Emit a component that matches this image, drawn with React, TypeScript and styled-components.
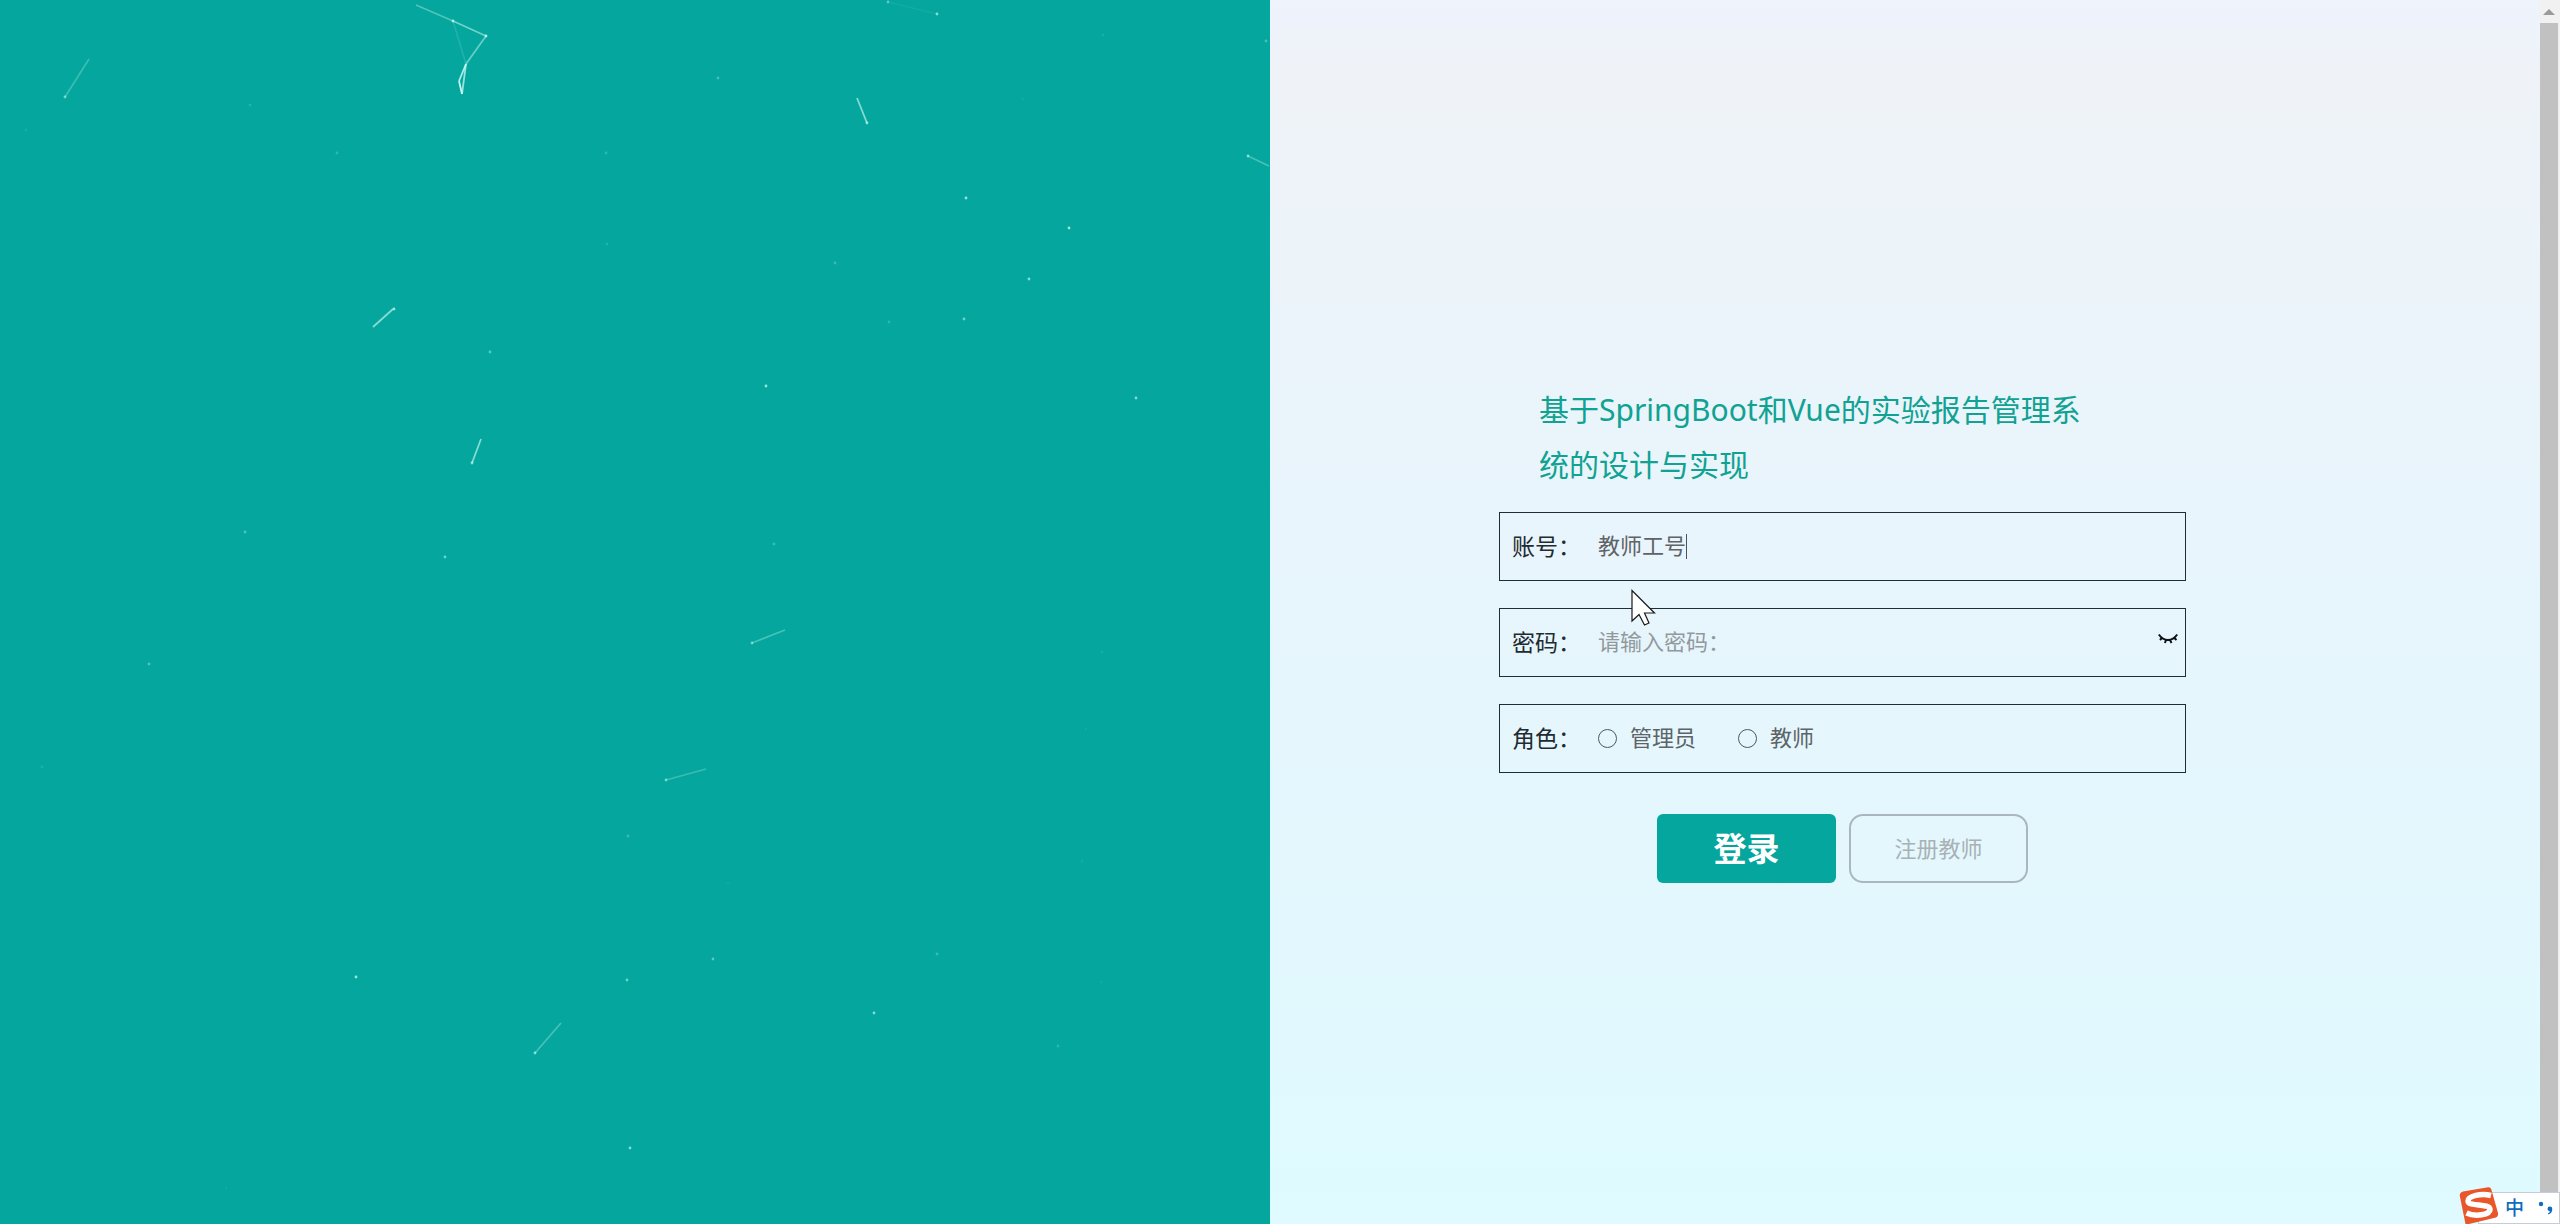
import React, { useState } from "react";
import styled, { createGlobalStyle } from "styled-components";

const GlobalStyle = createGlobalStyle`
  *, *::before, *::after { box-sizing: border-box; }
  body {
    margin: 0;
    overflow: hidden;
    font-family: "Noto Sans", "Noto Sans CJK SC", sans-serif;
  }
  button, input { font: inherit; }
`;

const Page = styled.div`
  display: flex;
  min-height: 100vh;
`;

const Split = styled.main`
  flex: 1;
  display: grid;
  grid-template-columns: 1fr 1fr;
`;

const Sky = styled.section`
  background: #04a69d;
  display: flex;
  overflow: hidden;
`;

const Particles = styled.svg`
  display: block;
  width: 100%;
  height: 100vh;
`;

const FormSide = styled.section`
  display: grid;
  grid-template-columns: 229fr 687fr 354fr;
  align-content: center;
  padding-top: 41px;
  background: linear-gradient(180deg, #eef3fc 0%, #eff3f8 6%, #eaf4fb 33%, #e5f6fd 60%, #dffbff 100%);
`;

const Form = styled.form`
  grid-column: 2;
  display: flex;
  flex-direction: column;
`;

const Title = styled.h1`
  margin: 0 0 20px;
  padding: 0 86px 0 40px;
  font-size: 30px;
  line-height: 55px;
  font-weight: 400;
  color: #10a292;
`;

const Fields = styled.div`
  display: flex;
  flex-direction: column;
  gap: 27px;
`;

const Field = styled.div`
  display: flex;
  align-items: center;
  height: 69px;
  padding: 0 7px 0 12px;
  border: 1px solid #1f2d35;
  font-size: 22px;
  line-height: 32px;
`;

const FieldName = styled.label`
  width: 86px;
  flex: none;
  padding-bottom: 2px;
  font-size: 23px;
  color: #1f2b30;
`;

const TextInput = styled.input<{ $fit?: boolean }>`
  ${(p) => (p.$fit ? "field-sizing: content;" : "flex: 1;")}
  min-width: 0;
  padding: 0 0 3px;
  border: 0;
  outline: 0;
  background: transparent;
  color: #606266;
  &::placeholder { color: #92999d; opacity: 1; }
`;

const Caret = styled.span`
  width: 1px;
  height: 25px;
  background: #4b5357;
`;

const EyeButton = styled.button`
  display: flex;
  padding: 0 0 8px;
  border: 0;
  background: transparent;
  cursor: pointer;
`;

const RoleList = styled.div`
  display: flex;
  gap: 42px;
`;

const RoleOption = styled.label`
  display: flex;
  align-items: center;
  gap: 13px;
  color: #5c6468;
`;

const RoleName = styled.span`
  padding-bottom: 3px;
`;

const Radio = styled.input`
  appearance: none;
  width: 19px;
  height: 19px;
  margin: 0;
  border: 1px solid #4f585c;
  border-radius: 50%;
  &:checked { border: 6px solid #04a69d; }
`;

const Actions = styled.div`
  display: flex;
  justify-content: center;
  gap: 13px;
  margin-top: 41px;
`;

const ActionButton = styled.button<{ $primary?: boolean }>`
  width: 179px;
  height: 69px;
  padding: 0 0 4px;
  cursor: pointer;
  border: ${(p) => (p.$primary ? "0" : "2px solid #aab7bf")};
  border-radius: ${(p) => (p.$primary ? "6px" : "14px")};
  background: ${(p) => (p.$primary ? "#04a69d" : "transparent")};
  color: ${(p) => (p.$primary ? "#fff" : "#a9b1b5")};
  font-size: ${(p) => (p.$primary ? "33px" : "22px")};
  font-weight: ${(p) => (p.$primary ? 700 : 400)};
`;

const ScrollTrack = styled.div`
  width: 20px;
  flex: none;
  display: flex;
  flex-direction: column;
  padding-right: 2px;
  background: #f1f1f1;
`;

const ScrollUp = styled.div`
  display: flex;
  justify-content: center;
  height: 23px;
  padding-top: 9px;
`;

const ScrollThumb = styled.div`
  flex: 1;
  background: #c1c1c1;
`;

const Pointer = styled.svg`
  position: absolute;
  left: 1631px;
  top: 589px;
  pointer-events: none;
`;

const ImeBar = styled.div`
  position: fixed;
  right: 0;
  bottom: 0;
  display: flex;
  align-items: flex-end;
`;

const ImeLogo = styled.svg`
  position: relative;
  z-index: 1;
  margin-right: -22px;
`;

const ImeKeys = styled.div`
  display: flex;
  align-items: center;
  gap: 14px;
  height: 32px;
  width: 82px;
  padding-left: 26px;
  background: #fff;
  border: 1px solid #c5ced6;
  color: #0f6ac0;
  font-size: 19px;
  font-weight: 500;
  line-height: 24px;
`;

type Line = [number, number, number, number, number];
const lines: Line[] = [
  [416, 5, 453, 21, 0.35],
  [453, 21, 486, 36, 0.5],
  [486, 36, 466, 64, 0.45],
  [466, 64, 459, 81, 0.8],
  [459, 81, 462, 94, 0.9],
  [466, 64, 462, 94, 0.7],
  [453, 21, 466, 64, 0.12],
  [89, 59, 65, 97, 0.25],
  [888, 2, 937, 14, 0.06],
  [857, 98, 867, 123, 0.6],
  [1248, 156, 1269, 166, 0.3],
  [393, 309, 373, 327, 0.6],
  [481, 439, 472, 463, 0.6],
  [785, 630, 752, 643, 0.3],
  [706, 769, 666, 780, 0.25],
  [561, 1023, 535, 1053, 0.3],
];

type Dot = [number, number, number];
const dots: Dot[] = [
  [453, 21, 0.7], [486, 36, 0.8], [65, 97, 0.5], [888, 2, 0.4], [937, 14, 0.6],
  [867, 123, 0.6], [1248, 156, 0.6], [394, 309, 0.7], [472, 463, 0.6], [752, 643, 0.5],
  [666, 780, 0.5], [535, 1053, 0.6],
  [718, 78, 0.3], [1103, 35, 0.1], [1266, 41, 0.3], [1023, 99, 0.06], [250, 105, 0.15],
  [26, 130, 0.1], [337, 153, 0.2], [606, 153, 0.2], [966, 198, 0.7], [1069, 228, 0.7],
  [607, 244, 0.15], [835, 263, 0.25], [1029, 279, 0.6], [964, 319, 0.5], [889, 322, 0.2],
  [490, 352, 0.4], [766, 386, 0.7], [1136, 398, 0.6], [245, 532, 0.35], [445, 557, 0.5],
  [774, 544, 0.25], [149, 664, 0.35], [1102, 652, 0.08], [1086, 729, 0.06], [42, 767, 0.12],
  [628, 836, 0.25], [1082, 861, 0.08], [728, 883, 0.06], [713, 959, 0.4], [937, 954, 0.25],
  [356, 977, 0.7], [627, 980, 0.5], [1101, 982, 0.06], [874, 1013, 0.6], [1058, 1046, 0.2],
  [630, 1148, 0.6], [226, 1188, 0.06],
];

const roles = ["管理员", "教师"];

export default function App() {
  const [role, setRole] = useState("");
  const [shown, setShown] = useState(false);

  return (
    <Page>
      <GlobalStyle />
      <Split>
        <Sky>
          <Particles viewBox="0 0 1270 1224" preserveAspectRatio="xMinYMin slice" aria-hidden="true">
            {lines.map(([x1, y1, x2, y2, o], i) => (
              <line key={i} x1={x1} y1={y1} x2={x2} y2={y2} stroke="#d9fffa" strokeWidth="1.8" opacity={o} />
            ))}
            {dots.map(([x, y, o], i) => (
              <circle key={i} cx={x} cy={y} r="1.4" fill="#d9fffa" opacity={o} />
            ))}
          </Particles>
        </Sky>
        <FormSide>
          <Form onSubmit={(e) => e.preventDefault()}>
            <Title>基于SpringBoot和Vue的实验报告管理系统的设计与实现</Title>
            <Fields>
              <Field>
                <FieldName htmlFor="account">账号：</FieldName>
                <TextInput id="account" $fit defaultValue="教师工号" />
                <Caret />
              </Field>
              <Field>
                <FieldName htmlFor="password">密码：</FieldName>
                <TextInput id="password" type={shown ? "text" : "password"} placeholder="请输入密码：" />
                <EyeButton type="button" aria-label="显示密码" onClick={() => setShown(!shown)}>
                  <svg width="20" height="12" viewBox="0 0 20 12" fill="none" stroke="#0b1214" strokeWidth="2">
                    <path d="M.8 1.500C3.200 5 6 7 10 7S16.800 5 19.200 1.500M4.200 4.500L2 7M8 6.800L7 10M12 6.800L13.500 10M15.800 4.500L18.500 7" />
                  </svg>
                </EyeButton>
              </Field>
              <Field role="radiogroup" aria-labelledby="role-name">
                <FieldName as="span" id="role-name">角色：</FieldName>
                <RoleList>
                  {roles.map((name) => (
                    <RoleOption key={name}>
                      <Radio type="radio" name="role" checked={role === name} onChange={() => setRole(name)} />
                      <RoleName>{name}</RoleName>
                    </RoleOption>
                  ))}
                </RoleList>
              </Field>
            </Fields>
            <Actions>
              <ActionButton type="submit" $primary>登录</ActionButton>
              <ActionButton type="button">注册教师</ActionButton>
            </Actions>
          </Form>
        </FormSide>
      </Split>
      <ScrollTrack aria-hidden="true">
        <ScrollUp>
          <svg width="12" height="6" viewBox="0 0 12 6"><path d="M6 0L12 6H0Z" fill="#9b9b9b" /></svg>
        </ScrollUp>
        <ScrollThumb />
      </ScrollTrack>
      <Pointer width="25" height="38" viewBox="0 0 25 38" aria-hidden="true">
        <path d="M1 1.500V32L8 25.500L13.500 36L18 34L13.500 24H23.500Z" fill="#fff" stroke="#1a1a1a" strokeWidth="1.200" />
      </Pointer>
      <ImeBar>
        <ImeLogo width="41" height="38" viewBox="0 0 41 38" aria-hidden="true">
          <path d="M4 5.500L29 1.200Q31.500 .8 32.200 3L39 27Q39.500 30 37 31.500L10 38H6.500L.8 10Q.3 6.500 4 5.500Z" fill="#e9562a" />
          <path d="M32 9.500C22 7 9 10 9 15C9 21 31 17 31 23.500C31 29 16 31 7.500 27" fill="none" stroke="#fff" strokeWidth="5.500" />
        </ImeLogo>
        <ImeKeys>
          <span>中</span>
          <svg width="16" height="16" viewBox="0 0 16 16" aria-hidden="true">
            <circle cx="3" cy="4" r="2.200" fill="#0f6ac0" />
            <path d="M9.500 9a2.400 2.400 0 1 1 4.800 0q0 4-3.800 5.500l-.6-1q2-1 2-2.300Q9.500 11 9.500 9Z" fill="#0f6ac0" />
          </svg>
        </ImeKeys>
      </ImeBar>
    </Page>
  );
}
